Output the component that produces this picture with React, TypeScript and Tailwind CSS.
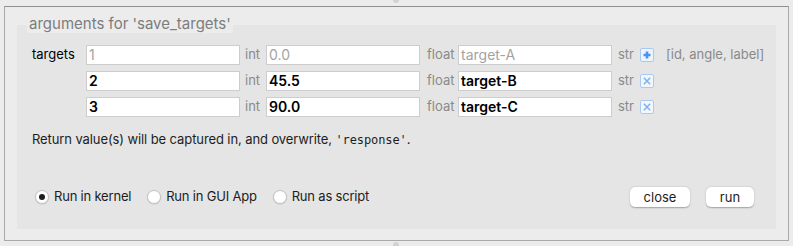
import React from "react";

type Row = { id: string; angle: string; label: string; placeholder?: boolean };

const rows: Row[] = [
  { id: "1", angle: "0.0", label: "target-A", placeholder: true },
  { id: "2", angle: "45.5", label: "target-B" },
  { id: "3", angle: "90.0", label: "target-C" },
];

function Field({ value, dim }: { value: string; dim?: boolean }) {
  return (
    <div
      className={`h-[20px] w-[154px] shrink-0 border border-[#cdcdcd] bg-white pl-[2px] text-[14px] leading-[18px] ${
        dim ? "text-[#a3a3a3]" : "font-semibold text-black"
      }`}
    >
      {value}
    </div>
  );
}

function PlusIcon() {
  return (
    <svg width="14" height="14" viewBox="0 0 14 14" className="shrink-0">
      <rect x="0.5" y="0.5" width="13" height="13" rx="1.5" fill="#eef4fc" stroke="#a9c9f1" />
      <path d="M7 3.5v7M3.5 7h7" stroke="#4b93ee" strokeWidth="2.6" />
    </svg>
  );
}

function CrossIcon() {
  return (
    <svg width="14" height="14" viewBox="0 0 14 14" className="shrink-0">
      <rect x="0.5" y="0.5" width="13" height="13" rx="1.5" fill="#f3f7fc" stroke="#a9cbf3" />
      <path d="M3.8 3.8l6.4 6.4M10.2 3.8l-6.4 6.4" stroke="#7fb1f0" strokeWidth="1.5" />
    </svg>
  );
}

function Radio({ label, checked }: { label: string; checked?: boolean }) {
  return (
    <div className="flex items-center">
      <span className="flex h-[14px] w-[14px] items-center justify-center rounded-full border border-[#c4c4c4] bg-white shadow-[0_0.5px_1px_rgba(0,0,0,0.15)]">
        {checked && <span className="h-[6px] w-[6px] rounded-full bg-[#1d1d1d]" />}
      </span>
      <span className="ml-[5px] text-[13px] tracking-[-0.2px] text-[#1d1d1d]">{label}</span>
    </div>
  );
}

export default function App() {
  return (
    <div
      className="relative h-[246px] w-[793px] overflow-hidden bg-[#ececec] pl-[4px] pt-[6px]"
      style={{ fontFamily: "Inter, 'Noto Sans', sans-serif" }}
    >
      <div className="absolute left-[393px] top-[-3px] h-[6px] w-[6px] rounded-full bg-[#d2d2d2]" />
      <div className="absolute left-[393px] top-[242px] h-[6px] w-[6px] rounded-full bg-[#d2d2d2]" />

      <div className="h-[235px] w-[785px] border border-[#a9a9a9] border-t-[#8e8e8e] pl-[12px] pt-[18px]">
        <div className="h-[204px] w-[759px] bg-[#e5e5e5] pl-[15px] pr-[22px]">
          <div className="ml-[-5px] block h-[18px] w-fit -translate-y-[10px] bg-[#ececec] px-[2px] text-[15px] leading-[18px] text-[#7d7d7d]">
            arguments for 'save_targets'
          </div>

          <div className="mt-[2px] flex flex-col gap-[6px]">
            {rows.map((r, i) => (
              <div key={r.id} className="flex h-[20px] items-center text-[13px] whitespace-nowrap">
                <span className="w-[54px] shrink-0 text-black">{i === 0 ? "targets" : ""}</span>
                <Field value={r.id} dim={r.placeholder} />
                <span className="ml-[5px] w-[21px] shrink-0 text-[#8a8a8a]">int</span>
                <Field value={r.angle} dim={r.placeholder} />
                <span className="ml-[7px] w-[31px] shrink-0 text-[#8a8a8a]">float</span>
                <Field value={r.label} dim={r.placeholder} />
                <span className="ml-[6px] w-[22px] shrink-0 text-[#8a8a8a]">str</span>
                {i === 0 ? <PlusIcon /> : <CrossIcon />}
                {i === 0 && (
                  <span className="ml-[12px] shrink-0 text-[#8a8a8a]">[id, angle, label]</span>
                )}
              </div>
            ))}
          </div>

          <div className="mt-[13px] text-[13px] tracking-[-0.1px] text-[#1d1d1d]">
            Return value(s) will be captured in, and overwrite,{" "}
            <span style={{ fontFamily: "'DejaVu Sans Mono', monospace" }} className="text-[12px]">
              'response'
            </span>
            .
          </div>

          <div className="mt-[37px] flex items-center">
            <div className="ml-[3px] flex items-center gap-[16px]">
              <Radio label="Run in kernel" checked />
              <Radio label="Run in GUI App" />
              <Radio label="Run as script" />
            </div>
            <div className="ml-auto flex gap-[16px]">
              <button className="h-[20px] w-[60px] rounded-[5px] bg-white text-[13px] leading-[20px] text-[#1d1d1d] shadow-[0_0.5px_1.5px_rgba(0,0,0,0.3)]">
                close
              </button>
              <button className="h-[20px] w-[48px] rounded-[5px] bg-white text-[13px] leading-[20px] text-[#1d1d1d] shadow-[0_0.5px_1.5px_rgba(0,0,0,0.3)]">
                run
              </button>
            </div>
          </div>
        </div>
      </div>
    </div>
  );
}
